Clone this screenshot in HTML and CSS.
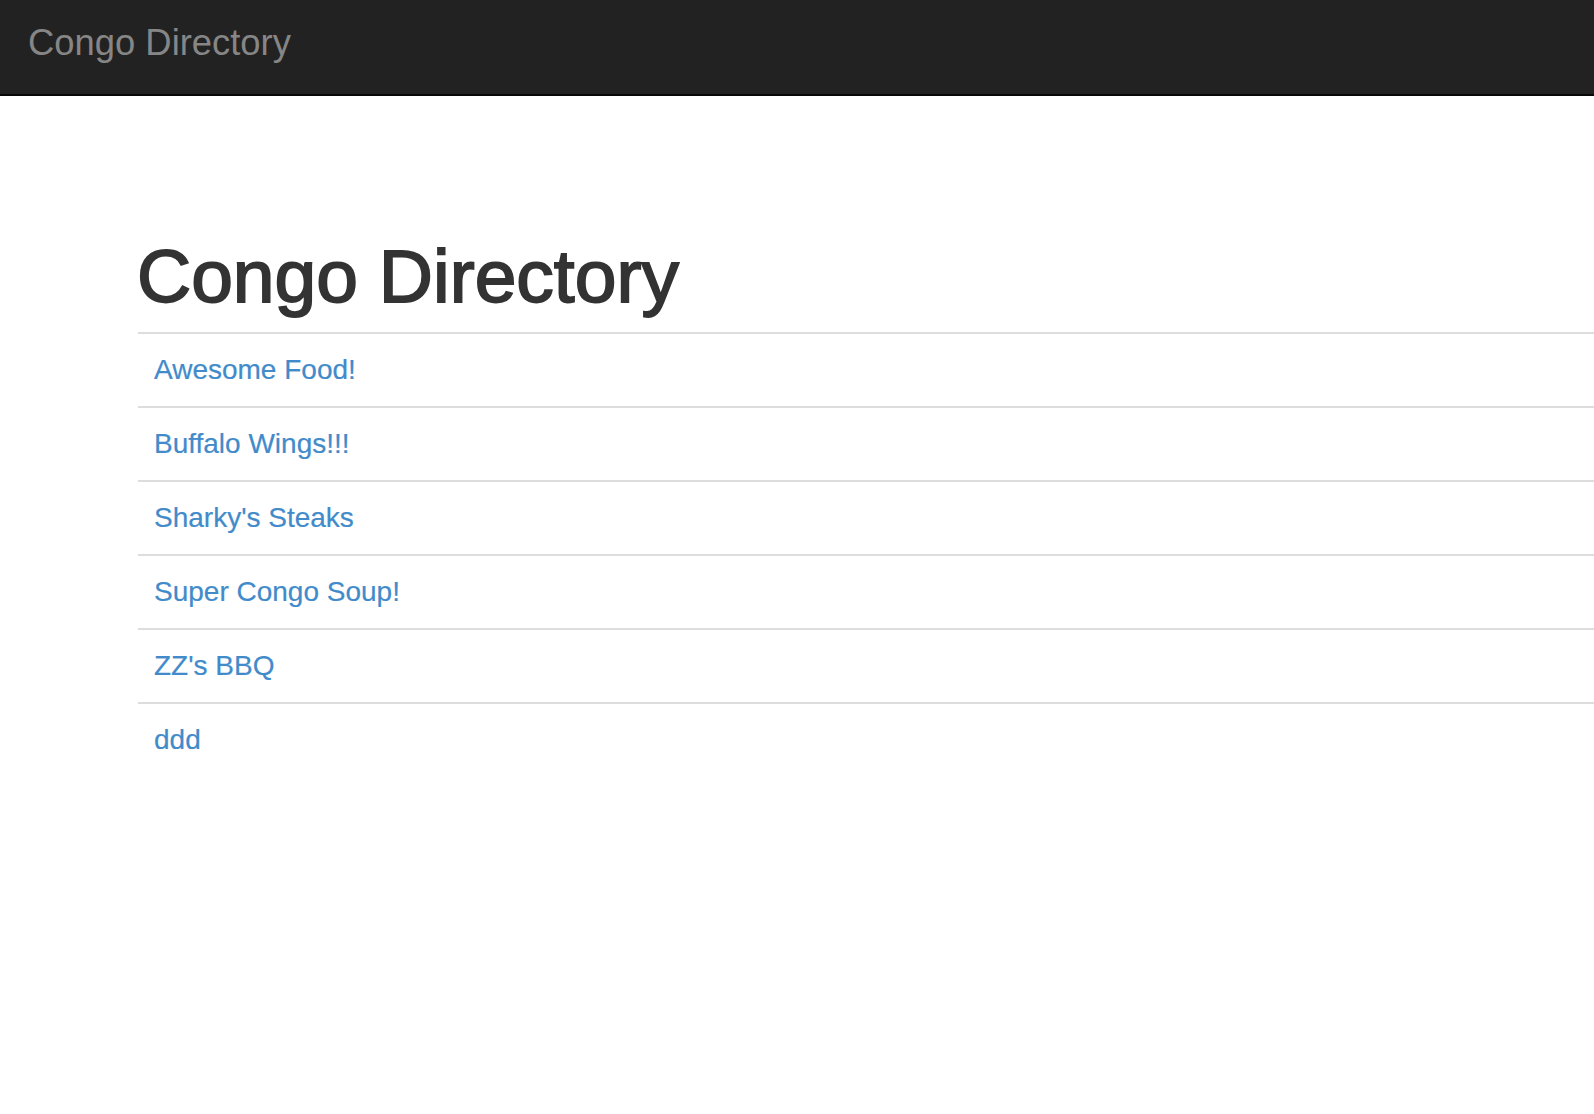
FILE: index.html
```html
<!DOCTYPE html>
<html lang="en">
<head>
<meta charset="utf-8">
<title>Congo Directory</title>
<link rel="stylesheet" href="styles.css">
</head>
<body>
<nav class="navbar">
  <a class="brand" href="#">Congo Directory</a>
</nav>
<main class="content">
  <h1 class="title">Congo Directory</h1>
  <ul class="list">
    <li class="row"><a href="#">Awesome Food!</a></li>
    <li class="row"><a href="#">Buffalo Wings!!!</a></li>
    <li class="row"><a href="#">Sharky's Steaks</a></li>
    <li class="row"><a href="#">Super Congo Soup!</a></li>
    <li class="row"><a href="#">ZZ's BBQ</a></li>
    <li class="row"><a href="#">ddd</a></li>
  </ul>
</main>
</body>
</html>
```

FILE: styles.css
```css
html, body {
  margin: 0;
  padding: 0;
  background: #fff;
  font-family: "Liberation Sans", Arial, sans-serif;
  overflow-x: hidden;
}

.navbar {
  height: 94px;
  box-sizing: content-box;
  background: #222;
  border-bottom: 2px solid #080808;
  padding: 0 0 0 28px;
  display: flex;
  align-items: flex-start;
}

.brand {
  margin-top: 23px;
  font-size: 36.4px;
  line-height: 40px;
  color: #868686;
  text-decoration: none;
}

.content {
  padding: 140px 0 0 138px;
}

.title {
  margin: 0 0 16px -1px;
  font-size: 75px;
  line-height: 80px;
  font-weight: 400;
  color: #333;
  -webkit-text-stroke: 1.8px #333;
}

.list {
  list-style: none;
  margin: 0;
  padding: 0;
}

.row {
  border-top: 2px solid #ddd;
  padding: 16px 15px 16px 16px;
  font-size: 28px;
  line-height: 40px;
}

.row a {
  color: #428bca;
  text-decoration: none;
  -webkit-text-stroke: 0.2px #428bca;
}
```
